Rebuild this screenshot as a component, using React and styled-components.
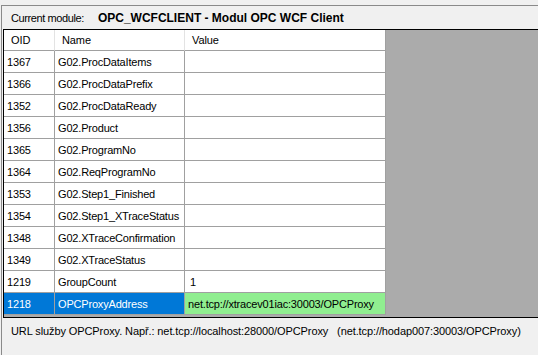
import styled, { createGlobalStyle } from 'styled-components';

const GlobalStyle = createGlobalStyle`
  html, body {
    margin: 0;
    padding: 0;
    background: #f0f0f0;
    overflow: hidden;
  }
  body {
    font-family: "Liberation Sans", Arial, sans-serif;
    font-size: 11px;
    color: #000;
  }
`;

/* outer frame of the module panel */
const Frame = styled.div`
  margin: 5px 0 0 1px;
  height: 350px;
  border-top: 1px solid #8a8a8a;
  border-left: 1px solid #8a8a8a;
  display: flex;
  flex-direction: column;
`;

/* "Current module:" header */
const ModuleBar = styled.div`
  height: 23px;
  display: flex;
  align-items: center;
  padding-left: 9px;
  gap: 14px;
  font-size: 11px;
  letter-spacing: -0.4px;

  b {
    font-size: 12px;
    letter-spacing: 0;
  }
`;

const Grid = styled.div`
  margin-left: 1px;
  height: 287px;
  border: 1px solid #000;
  border-right: none;
  background: #ababab;
  display: flex;
  flex-direction: column;
`;

const Row = styled.div`
  display: grid;
  grid-template-columns: 51px 130px 201px;
  width: 382px;
`;

const HeadCell = styled.div`
  height: 20px;
  display: flex;
  align-items: center;
  padding-left: 7px;
  background: #fff;
  border-bottom: 1px solid #a0a0a0;
  border-right: 1px solid ${p => (p.$last ? '#a0a0a0' : '#e3e3e3')};
  letter-spacing: -0.1px;
`;

const Cell = styled.div`
  height: 21px;
  display: flex;
  align-items: center;
  padding-left: ${p => p.$pad || 3}px;
  white-space: nowrap;
  overflow: hidden;
  border-right: 1px solid #a0a0a0;
  border-bottom: 1px solid #a0a0a0;
  letter-spacing: -0.18px;
  background: ${p => (p.$selected ? '#0078d7' : p.$edited ? '#90ee90' : '#fff')};
  color: ${p => (p.$selected ? '#fff' : '#000')};
`;

const StatusBar = styled.div`
  flex: 1;
  padding: 7px 0 0 9px;
  white-space: pre;
  letter-spacing: -0.1px;
`;

const rows = [
  { oid: 1367, name: 'G02.ProcDataItems', value: '' },
  { oid: 1366, name: 'G02.ProcDataPrefix', value: '' },
  { oid: 1352, name: 'G02.ProcDataReady', value: '' },
  { oid: 1356, name: 'G02.Product', value: '' },
  { oid: 1365, name: 'G02.ProgramNo', value: '' },
  { oid: 1364, name: 'G02.ReqProgramNo', value: '' },
  { oid: 1353, name: 'G02.Step1_Finished', value: '' },
  { oid: 1354, name: 'G02.Step1_XTraceStatus', value: '' },
  { oid: 1348, name: 'G02.XTraceConfirmation', value: '' },
  { oid: 1349, name: 'G02.XTraceStatus', value: '' },
  { oid: 1219, name: 'GroupCount', value: '1' },
  { oid: 1218, name: 'OPCProxyAddress', value: 'net.tcp://xtracev01iac:30003/OPCProxy', selected: true },
];

const App = () => {
  return (
    <>
      <GlobalStyle />
      <Frame>
        <ModuleBar>
          <span>Current module:</span>
          <b>OPC_WCFCLIENT - Modul OPC WCF Client</b>
        </ModuleBar>

        <Grid>
          <Row>
            <HeadCell>OID</HeadCell>
            <HeadCell>Name</HeadCell>
            <HeadCell $last>Value</HeadCell>
          </Row>
          {rows.map(r => (
            <Row key={r.oid}>
              <Cell $selected={r.selected}>{r.oid}</Cell>
              <Cell $selected={r.selected}>{r.name}</Cell>
              <Cell $edited={r.selected} $pad={r.selected ? 3 : 5}>{r.value}</Cell>
            </Row>
          ))}
        </Grid>

        <StatusBar>URL služby OPCProxy. Např.: net.tcp://localhost:28000/OPCProxy   (net.tcp://hodap007:30003/OPCProxy)</StatusBar>
      </Frame>
    </>
  );
};

export default App;
